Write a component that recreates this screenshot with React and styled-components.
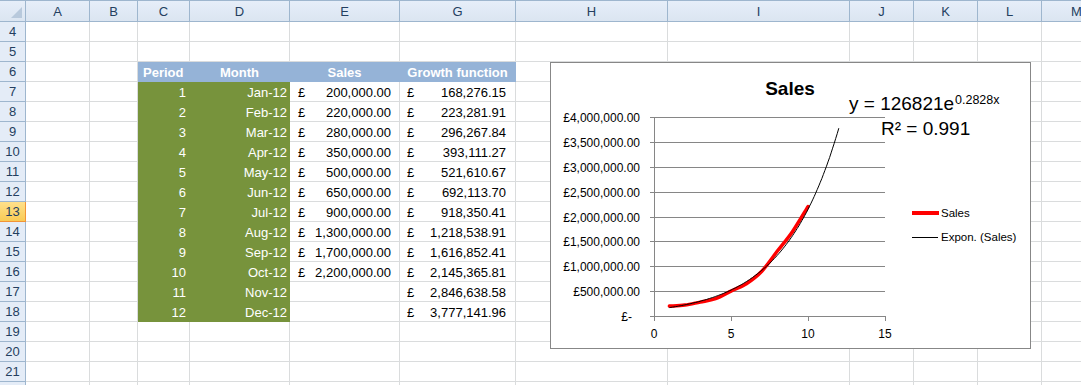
import styled, { createGlobalStyle } from "styled-components";

const GRID = "#dadcdd";
const HEAD_BORDER = "#9eb6ce";
const BLUE = "#95b3d7";
const GREEN = "#77933c";

const COLUMNS = [
  { key: "A", w: 64 },
  { key: "B", w: 48 },
  { key: "C", w: 52 },
  { key: "D", w: 100 },
  { key: "E", w: 110 },
  { key: "G", w: 116 },
  { key: "H", w: 152 },
  { key: "I", w: 182 },
  { key: "J", w: 64 },
  { key: "K", w: 64 },
  { key: "L", w: 64 },
  { key: "M", w: 70 },
];

const MONTHS = ["Jan", "Feb", "Mar", "Apr", "May", "Jun", "Jul", "Aug", "Sep", "Oct", "Nov", "Dec"];
const SALES = [200000, 220000, 280000, 350000, 500000, 650000, 900000, 1300000, 1700000, 2200000];
const GROWTH = [
  "168,276.15", "223,281.91", "296,267.84", "393,111.27", "521,610.67", "692,113.70",
  "918,350.41", "1,218,538.91", "1,616,852.41", "2,145,365.81", "2,846,638.58", "3,777,141.96",
];

const fmt = (v) => v.toLocaleString("en-GB", { minimumFractionDigits: 2 });

const GlobalStyle = createGlobalStyle`
  html, body {
    margin: 0;
    background: #fff;
    overflow: hidden;
  }
  body {
    font-family: "Liberation Sans", Arial, sans-serif;
  }
`;

const Sheet = styled.div`
  position: relative;
  width: 1081px;
  height: 385px;
  overflow: hidden;
  background: #fff;
  font-size: 13px;
`;

const HeaderRow = styled.div`
  display: flex;
  height: 22px;
  box-sizing: border-box;
  border-top: 1px solid ${HEAD_BORDER};
  border-bottom: 1px solid ${HEAD_BORDER};
  background: linear-gradient(#e6eef9, #dbe5f1);
`;

const Corner = styled.div`
  position: relative;
  flex: 0 0 26px;
  box-sizing: border-box;
  border-right: 1px solid ${HEAD_BORDER};
  &::after {
    content: "";
    position: absolute;
    right: 3px;
    bottom: 3px;
    border-left: 11px solid transparent;
    border-bottom: 11px solid #b8c9dc;
  }
`;

const ColHeader = styled.div`
  flex: 0 0 ${({ $w }) => $w}px;
  box-sizing: border-box;
  border-right: 1px solid ${HEAD_BORDER};
  display: flex;
  align-items: center;
  justify-content: center;
  color: #243f60;
`;

const Row = styled.div`
  display: flex;
  height: 20px;
`;

const RowHeader = styled.div`
  flex: 0 0 26px;
  box-sizing: border-box;
  display: flex;
  align-items: center;
  justify-content: center;
  color: #243f60;
  background: ${({ $active }) => ($active ? "linear-gradient(#ffe08a, #f9cb55)" : "#e4ecf7")};
  border-right: 1px solid ${({ $active }) => ($active ? "#f29436" : HEAD_BORDER)};
  border-bottom: 1px solid ${({ $active }) => ($active ? "#f29436" : HEAD_BORDER)};
`;

const Cell = styled.div`
  flex: 0 0 ${({ $w }) => $w}px;
  box-sizing: border-box;
  display: flex;
  align-items: center;
  justify-content: ${({ $align }) => $align || "flex-start"};
  padding: ${({ $pad }) => $pad || "0 3px"};
  padding-top: 1px;
  background: ${({ $fill }) => $fill || "#fff"};
  color: ${({ $fill }) => ($fill ? "#fff" : "#000")};
  font-weight: ${({ $bold }) => ($bold ? 700 : 400)};
  border-right: 1px solid ${({ $fill }) => $fill || GRID};
  border-bottom: 1px solid ${({ $fill }) => $fill || GRID};
  white-space: nowrap;
`;

const Money = styled.div`
  flex: 1;
  display: flex;
  justify-content: space-between;
`;

const ChartBox = styled.div`
  position: absolute;
  left: 550px;
  top: 62px;
  width: 481px;
  height: 287px;
  box-sizing: border-box;
  border: 1px solid #878787;
  background: #fff;
`;

const ChartSvg = styled.svg`
  display: block;
  font-family: "Liberation Sans", Arial, sans-serif;
`;

function money(v) {
  if (v == null) return null;
  return (
    <Money>
      <span>£</span>
      <span>{v}</span>
    </Money>
  );
}

function tableCells(r) {
  // r is the sheet row number; data starts in row 7
  const i = r - 7;
  if (r === 6) {
    return {
      C: { text: "Period", fill: BLUE, bold: true, pad: "0 5px" },
      D: { text: "Month", fill: BLUE, bold: true, align: "center" },
      E: { text: "Sales", fill: BLUE, bold: true, align: "center" },
      G: { text: "Growth function", fill: BLUE, bold: true, align: "center" },
    };
  }
  if (i >= 0 && i < 12) {
    return {
      C: { text: String(i + 1), fill: GREEN, align: "flex-end" },
      D: { text: `${MONTHS[i]}-12`, fill: GREEN, align: "flex-end", pad: "0 2px" },
      E: { text: money(SALES[i] != null ? fmt(SALES[i]) : null), pad: "0 8px 0 8px" },
      G: { text: money(GROWTH[i]), pad: "0 9px 0 7px" },
    };
  }
  return {};
}

// plot coordinates, measured from the chart's outer corner
const X0 = 104;
const Y0 = 254;
const XS = 15.4;
const YS = 199 / 4000000;
const px = (t) => X0 + t * XS;
const py = (v) => Y0 - v * YS;

function smoothPath(pts) {
  let d = `M${pts[0][0].toFixed(1)},${pts[0][1].toFixed(1)}`;
  for (let i = 0; i < pts.length - 1; i++) {
    const p0 = pts[i - 1] || pts[i];
    const p1 = pts[i];
    const p2 = pts[i + 1];
    const p3 = pts[i + 2] || p2;
    const c1 = [p1[0] + (p2[0] - p0[0]) / 6, p1[1] + (p2[1] - p0[1]) / 6];
    const c2 = [p2[0] - (p3[0] - p1[0]) / 6, p2[1] - (p3[1] - p1[1]) / 6];
    d += ` C${c1.map((n) => n.toFixed(1))} ${c2.map((n) => n.toFixed(1))} ${p2.map((n) => n.toFixed(1))}`;
  }
  return d;
}

const Y_LABELS = [
  "£-", "£500,000.00", "£1,000,000.00", "£1,500,000.00", "£2,000,000.00",
  "£2,500,000.00", "£3,000,000.00", "£3,500,000.00", "£4,000,000.00",
];

function SalesChart() {
  const salesPts = SALES.map((v, i) => [px(i + 1), py(v)]);
  const trend = [];
  for (let t = 1; t <= 12.0001; t += 0.1) trend.push([px(t), py(126821 * Math.exp(0.2828 * t))]);
  const trendD = "M" + trend.map((p) => `${p[0].toFixed(1)},${p[1].toFixed(1)}`).join(" L");

  return (
    <ChartSvg width="479" height="285" viewBox="0 0 479 285">
      <g transform="translate(-1,-1)">
        <text x="240" y="33" textAnchor="middle" fontSize="19" fontWeight="700">Sales</text>

        {Y_LABELS.map((label, k) => {
          const y = Math.round(py(k * 500000)) + 0.5;
          return (
            <g key={label}>
              <line x1="100" x2="335" y1={y} y2={y} stroke="#868686" shapeRendering="crispEdges" />
              <text x={k === 0 ? 82 : 90} y={y + 4} textAnchor="end" fontSize="12">{label}</text>
            </g>
          );
        })}
        <line x1={X0 + 0.5} x2={X0 + 0.5} y1={Math.round(py(4000000))} y2={Y0 + 0.5} stroke="#868686" shapeRendering="crispEdges" />
        {[0, 5, 10, 15].map((t) => (
          <g key={t}>
            <line x1={Math.round(px(t)) + 0.5} x2={Math.round(px(t)) + 0.5} y1={Y0} y2={Y0 + 5} stroke="#868686" shapeRendering="crispEdges" />
            <text x={px(t)} y="276" textAnchor="middle" fontSize="12">{t}</text>
          </g>
        ))}

        <path d={smoothPath(salesPts)} fill="none" stroke="#ff0000" strokeWidth="3.5" strokeLinecap="round" />
        <path d={trendD} fill="none" stroke="#000" strokeWidth="1" />

        <text x="299" y="48" fontSize="19">y = 126821e</text>
        <text x="405" y="42" fontSize="12.5">0.2828x</text>
        <text x="331" y="73" fontSize="19">R² = 0.991</text>

        <line x1="362" x2="389" y1="151" y2="151" stroke="#ff0000" strokeWidth="4" />
        <text x="391" y="155" fontSize="11.5">Sales</text>
        <line x1="362" x2="388" y1="175.5" y2="175.5" stroke="#000" strokeWidth="1" />
        <text x="391" y="179" fontSize="11.5">Expon. (Sales)</text>
      </g>
    </ChartSvg>
  );
}

export default function App() {
  const rows = [];
  for (let r = 4; r <= 22; r++) rows.push(r);

  return (
    <>
      <GlobalStyle />
      <Sheet>
        <HeaderRow>
          <Corner />
          {COLUMNS.map((c) => (
            <ColHeader key={c.key} $w={c.w}>{c.key}</ColHeader>
          ))}
        </HeaderRow>
        {rows.map((r) => {
          const cells = tableCells(r);
          return (
            <Row key={r}>
              <RowHeader $active={r === 13}>{r < 22 ? r : ""}</RowHeader>
              {COLUMNS.map((c) => {
                const cell = cells[c.key] || {};
                return (
                  <Cell
                    key={c.key}
                    $w={c.w}
                    $fill={cell.fill}
                    $bold={cell.bold}
                    $align={cell.align}
                    $pad={cell.pad}
                  >
                    {cell.text}
                  </Cell>
                );
              })}
            </Row>
          );
        })}
        <ChartBox>
          <SalesChart />
        </ChartBox>
      </Sheet>
    </>
  );
}
